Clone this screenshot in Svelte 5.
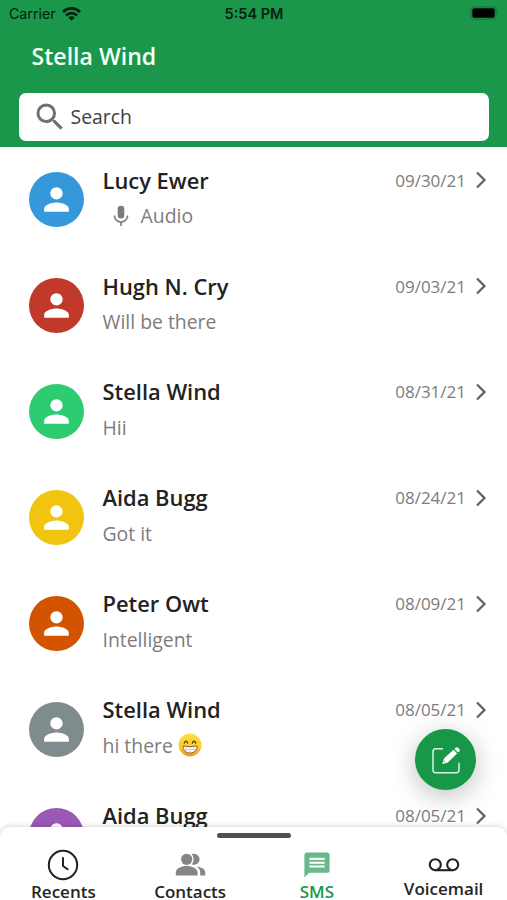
<script lang="ts">
    type Conversation = {
        id: number;
        name: string;
        message: string;
        date: string;
        color: string;
        audio?: boolean;
        emoji?: boolean;
    };

    const conversations: Conversation[] = [
        { id: 1, name: "Lucy Ewer", message: "Audio", date: "09/30/21", color: "#3498db", audio: true },
        { id: 2, name: "Hugh N. Cry", message: "Will be there", date: "09/03/21", color: "#c0392b" },
        { id: 3, name: "Stella Wind", message: "Hii", date: "08/31/21", color: "#2ecc71" },
        { id: 4, name: "Aida Bugg", message: "Got it", date: "08/24/21", color: "#f1c40f" },
        { id: 5, name: "Peter Owt", message: "Intelligent", date: "08/09/21", color: "#d35400" },
        { id: 6, name: "Stella Wind", message: "hi there", date: "08/05/21", color: "#7f8c8d", emoji: true },
        { id: 7, name: "Aida Bugg", message: "", date: "08/05/21", color: "#9b59b6" },
    ];

    const tabs = ["Recents", "Contacts", "SMS", "Voicemail"];
    let activeTab = $state("SMS");
</script>

<div class="phone">
    <header>
        <div class="status-bar">
            <div class="carrier">
                <span>Carrier</span>
                <svg width="19" height="14" viewBox="0 0 19 14" fill="none" stroke="#04210f" stroke-width="2.8">
                    <path d="M1 4.9a12.2 12.2 0 0 1 17 0" />
                    <path d="M4 8.4a7.8 7.8 0 0 1 11 0" />
                    <path d="M9.5 13.7 6.3 10.6a4.4 4.4 0 0 1 6.4 0z" fill="#04210f" stroke="none" />
                </svg>
            </div>
            <span class="time">5:54 PM</span>
            <svg class="battery" width="30" height="14" viewBox="0 0 30 14">
                <rect x="0.8" y="0.8" width="25.4" height="12.4" rx="3.6" fill="none" stroke="#137a3b" stroke-width="1.3" />
                <rect x="2.3" y="2.3" width="22.4" height="9.4" rx="1.8" fill="#000" />
                <path d="M27.6 5q1.8 2 0 4z" fill="#137a3b" />
            </svg>
        </div>
        <h1>Stella Wind</h1>
        <label class="search">
            <svg width="36" height="36" viewBox="0 0 24 24" fill="#707070">
                <path
                    d="M15.5 14h-.79l-.28-.27A6.47 6.47 0 0 0 16 9.5 6.5 6.5 0 1 0 9.5 16c1.61 0 3.09-.59 4.23-1.57l.27.28v.79l5 4.99L20.49 19l-4.99-5zm-6 0C7.01 14 5 11.99 5 9.5S7.01 5 9.5 5 14 7.01 14 9.5 11.99 14 9.5 14z"
                />
            </svg>
            <span>Search</span>
        </label>
    </header>

    <main>
        {#each conversations as item (item.id)}
            <div class="row">
                <div class="avatar" style="background-color: {item.color}">
                    <svg width="37" height="37" viewBox="0 0 24 24" fill="#fff">
                        <path
                            d="M12 12c2.21 0 4-1.79 4-4s-1.79-4-4-4-4 1.79-4 4 1.79 4 4 4zm0 2c-2.67 0-8 1.34-8 4v2h16v-2c0-2.66-5.33-4-8-4z"
                        />
                    </svg>
                </div>
                <div class="info">
                    <div class="name">{item.name}</div>
                    <div class="message" class:audio={item.audio}>
                        {#if item.audio}
                            <svg width="24" height="24" viewBox="0 0 24 24" fill="#7c7c7c">
                                <path
                                    d="M12 14.5a3.300 3.300 0 0 0 3.300-3.300V5a3.300 3.300 0 0 0-6.600 0v6.200a3.300 3.300 0 0 0 3.300 3.300zm5.800-3a5.800 5.800 0 0 1-11.600 0H4.600c0 3.700 2.900 6.700 6.600 7.200V22h1.600v-3.300c3.700-.5 6.600-3.500 6.600-7.200z"
                                />
                            </svg>
                        {/if}
                        <span>{item.message}</span>
                        {#if item.emoji}
                            <svg class="emoji" width="24" height="24" viewBox="0 0 24 24">
                                <defs>
                                    <linearGradient id="face" x1="0" y1="0" x2="0" y2="1">
                                        <stop offset="0" stop-color="#ffdf3f" />
                                        <stop offset="0.6" stop-color="#fdc82f" />
                                        <stop offset="1" stop-color="#ee9426" />
                                    </linearGradient>
                                </defs>
                                <circle cx="12" cy="12" r="11.4" fill="url(#face)" />
                                <path
                                    d="M6.300 10q1.700-3.800 3.300 0M14.400 10q1.700-3.800 3.300 0"
                                    fill="none"
                                    stroke="#553a14"
                                    stroke-width="1.4"
                                    stroke-linecap="round"
                                />
                                <path
                                    d="M5 13q7 1.300 14 0c.2 4.200-2.700 7-7 7s-7.200-2.800-7-7z"
                                    fill="#fff"
                                    stroke="#8a642c"
                                    stroke-width="1"
                                />
                                <path
                                    d="M5.600 16.300q6.400 1 12.800 0M8.600 13.600v5M12 14v5.700M15.400 13.600v5"
                                    fill="none"
                                    stroke="#c4c1bb"
                                    stroke-width="0.7"
                                />
                            </svg>
                        {/if}
                    </div>
                </div>
                <div class="meta">
                    <span>{item.date}</span>
                    <svg width="12" height="18" viewBox="0 0 12 18" fill="none" stroke="#606060" stroke-width="2.2">
                        <path d="M2 1.500 9.500 9 2 16.500" />
                    </svg>
                </div>
            </div>
        {/each}
    </main>

    <button class="compose" aria-label="New message">
        <svg width="30" height="30" viewBox="0 0 30 30">
            <path
                d="M12 3.700H4.500a2.500 2.500 0 0 0-2.500 2.500v19a2.500 2.500 0 0 0 2.500 2.500h21a2.500 2.500 0 0 0 2.500-2.500v-7.500"
                fill="none"
                stroke="#d9f5e2"
                stroke-width="1.5"
            />
            <path
                d="m11.300 18.900 1.700-5.300L22.500 4.800l3.600 3.700-9.600 9.200zM23.500 3.900l1.200-1.200q1.200-1 2.400 0l1.300 1.400q1 1.200 0 2.200l-1.300 1.300z"
                fill="#fff"
            />
            <path d="m12.700 15.700 1.700 1.700" stroke="#179848" stroke-width="0.8" />
        </svg>
    </button>

    <nav>
        <span class="handle"></span>
        {#each tabs as tab (tab)}
            <button class="tab" class:active={activeTab === tab} onclick={() => (activeTab = tab)}>
                {#if tab === "Recents"}
                    <svg width="32" height="32" viewBox="0 0 32 32" fill="none" stroke="#222" stroke-linecap="round">
                        <circle cx="16" cy="16" r="14.2" stroke-width="2" />
                        <path d="M16 9v8l4.600 3.300" stroke-width="2" stroke-linejoin="round" />
                    </svg>
                {:else if tab === "Contacts"}
                    <svg width="32" height="32" viewBox="0 0 32 32" fill="#858585">
                        <circle cx="12.7" cy="10.3" r="5.6" />
                        <path
                            d="M1.800 26.500v-3.300c0-4.300 7.200-6.200 10.900-6.200s10.900 1.900 10.900 6.200v3.300zM17.800 15.500a8.300 8.300 0 0 0 0-10.400c4-1.400 7.800 1.500 7.800 5.200s-3.800 6.600-7.800 5.200zM22.500 17.400c4 .5 8.700 2.400 8.700 5.800v3.300h-5v-3.300c0-2.500-1.500-4.400-3.700-5.800z"
                        />
                    </svg>
                {:else if tab === "SMS"}
                    <svg width="32" height="32" viewBox="0 0 32 32">
                        <path
                            d="M6 3.600h20a2.600 2.600 0 0 1 2.600 2.600v15a2.600 2.600 0 0 1-2.600 2.600H8.200L3.400 28.600V6.200A2.600 2.600 0 0 1 6 3.600z"
                            fill="#69b98a"
                        />
                        <path d="M8.400 9.900h15.200M8.400 13.700h15.200M8.400 17.500h15.200" stroke="#fff" stroke-width="2.1" />
                    </svg>
                {:else}
                    <svg width="32" height="32" viewBox="0 0 32 32" fill="none" stroke="#222" stroke-width="2.1">
                        <circle cx="7.3" cy="15.7" r="5.5" />
                        <circle cx="24.7" cy="15.7" r="5.5" />
                        <path d="M7.300 21.200h17.400" />
                    </svg>
                {/if}
                <span class:raised={tab === "Voicemail"}>{tab}</span>
            </button>
        {/each}
    </nav>
</div>

<style>
    :global(body) {
        margin: 0;
    }

    .phone {
        position: relative;
        display: flex;
        flex-direction: column;
        width: 507px;
        height: 900px;
        overflow: hidden;
        background: #fff;
        font-family: "Open Sans", sans-serif;
    }

    header {
        flex: none;
        display: flex;
        flex-direction: column;
        height: 147.4px;
        box-sizing: border-box;
        padding: 0 18px 0 19px;
        background: #1a974a;
    }

    .status-bar {
        display: grid;
        grid-template-columns: 1fr auto 1fr;
        align-items: center;
        height: 27px;
        margin: 0 -13px 0 -10px;
        font-family: Inter, sans-serif;
        font-size: 14px;
        color: #04210f;
    }

    .carrier {
        display: flex;
        align-items: center;
        gap: 6px;
    }

    .carrier span {
        font-size: 14.2px;
    }

    .time {
        margin-right: 3px;
        font-size: 14.5px;
        font-weight: 600;
    }

    .battery {
        justify-self: end;
        margin-right: 2px;
        margin-bottom: 1px;
    }

    h1 {
        margin: 13px 0 0 12.5px;
        font-size: 23.1px;
        font-weight: 600;
        line-height: 32px;
        color: #f4fff7;
    }

    .search {
        display: flex;
        align-items: center;
        gap: 3px;
        height: 48.5px;
        margin-top: 20.5px;
        padding-left: 12.5px;
        border-radius: 7px;
        background: #fff;
        font-size: 19.4px;
        color: #404040;
    }

    main {
        flex: 1;
        min-height: 0;
        overflow: hidden;
    }

    .row {
        display: flex;
        height: 105.9px;
        box-sizing: border-box;
        padding: 17.3px 20.5px 0 29px;
    }

    .avatar {
        flex: none;
        display: flex;
        align-items: center;
        justify-content: center;
        width: 55px;
        height: 55px;
        margin-top: 7.5px;
        border-radius: 50%;
    }

    .info {
        flex: 1;
        padding-left: 18.5px;
    }

    .name {
        font-size: 21.9px;
        font-weight: 600;
        line-height: 32px;
        color: #222;
    }

    .message {
        display: flex;
        align-items: center;
        height: 28px;
        margin-top: 5px;
        font-size: 19.4px;
        color: #7c7c7c;
    }

    .audio {
        gap: 8px;
        padding-left: 6px;
    }

    .emoji {
        margin-left: 5.5px;
    }

    .meta {
        display: flex;
        align-items: center;
        gap: 8.5px;
        height: 31px;
        font-size: 17px;
        color: #7c7c7c;
    }

    .compose {
        position: absolute;
        right: 31px;
        bottom: 110px;
        display: flex;
        align-items: center;
        justify-content: center;
        width: 61px;
        height: 61px;
        padding: 0;
        border: none;
        border-radius: 50%;
        background: #179848;
        box-shadow: 0 6px 26px rgba(0, 0, 0, 0.25);
    }

    nav {
        position: relative;
        flex: none;
        display: grid;
        grid-template-columns: repeat(4, 1fr);
        height: 73px;
        border-radius: 10px 10px 0 0;
        background: #fff;
        box-shadow: 0 -1px 5px rgba(0, 0, 0, 0.16);
    }

    .handle {
        position: absolute;
        top: 6px;
        left: 217px;
        width: 74px;
        height: 5px;
        border-radius: 3px;
        background: #505050;
    }

    .tab {
        display: flex;
        flex-direction: column;
        align-items: center;
        gap: 3px;
        padding: 22px 0 0;
        border: none;
        background: none;
        font-family: inherit;
        font-size: 17px;
        font-weight: 600;
        line-height: 16px;
        color: #252525;
    }

    .active {
        color: #1a974a;
    }

    .raised {
        margin-top: -3px;
    }
</style>
